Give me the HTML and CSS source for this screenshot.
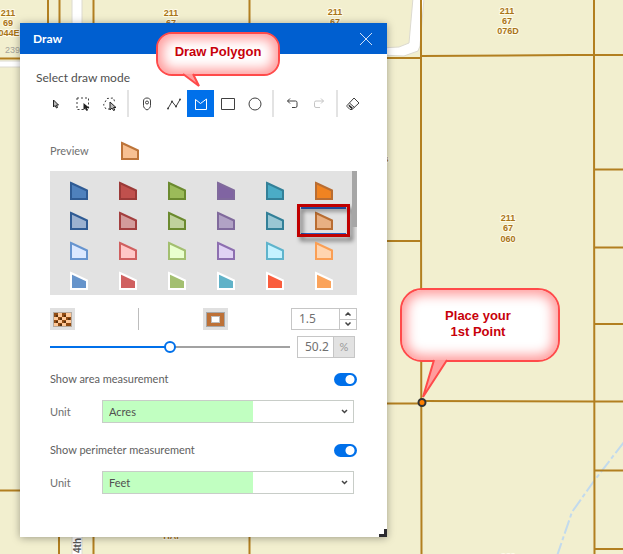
FILE: index.html
```html
<!DOCTYPE html>
<html lang="en">
<head>
<meta charset="utf-8">
<title>Draw</title>
<link rel="stylesheet" href="styles.css">
</head>
<body>
<main class="map">
  <svg class="map-canvas" viewBox="0 0 623 554" preserveAspectRatio="xMinYMin slice" aria-label="Parcel map">
    <rect class="land" width="623" height="554"/>
    <g class="road">
      <path d="M72 -2V61H-2V67H72V556H82V-2Z"/>
      <path d="M413 -2L409 43L399 47L380 48V55L404 56L418 51L420 46L424 -2Z"/>
    </g>
    <path class="stream" d="M624 442L594 481L572 512L557 556"/>
    <g class="parcel">
      <path d="M48 0V58M59.500 0V58M59 60V554M93.500 0V554M249.500 0V554M0 58.500H72M0 490.500H72"/>
      <path d="M421 0V190L421.500 554M594 0V85L594.500 554"/>
      <path d="M380 58H421M421 56L571 55H623M380 241H421M594 169.500H623M594 247.500H623M594 324H623M380 403.500H421M421 401L594 401.500H623M594 470.500H623M594 549H623"/>
    </g>
    <g class="parcel-label">
      <text x="8" y="16">211</text><text x="8" y="26">69</text><text x="9" y="36">044E</text>
      <text x="171" y="16">211</text><text x="171" y="26">67</text>
      <text x="335" y="15">211</text><text x="335" y="25">67</text>
      <text x="507" y="14">211</text><text x="507" y="24">67</text><text x="508" y="34">076D</text>
      <text x="508" y="221">211</text><text x="508" y="231">67</text><text x="508" y="242">060</text>
      <text x="171" y="539">HAI</text><text x="508" y="560">211</text>
      <text x="386" y="162">s</text>
    </g>
    <text class="address" x="5" y="53">239</text>
    <text class="street" transform="translate(81 553) rotate(-90)">4th</text>
    <circle class="point" cx="422" cy="402.500" r="3.500"/>
  </svg>

  <section class="panel">
    <header class="panel-header">
      <h1>Draw</h1>
      <button class="close" aria-label="Close"><svg width="12" height="12" viewBox="0 0 12 12"><path d="M0 0L12 12M12 0L0 12"/></svg></button>
    </header>
    <div class="panel-body">
      <h2>Select draw mode</h2>
      <div class="toolbar">
        <button aria-label="Select"><svg viewBox="0 0 16 16"><path class="thin" d="M5.500 4V11L7 9.500L8.500 12L9.500 11.500L8.500 9H10.500Z"/></svg></button>
        <button aria-label="Select by rectangle"><svg viewBox="0 0 16 16"><path class="dash" d="M2 2H13.500V13.500H2Z"/><path class="solid" d="M8.500 7V14L10.300 12.500L11.500 15L13 14.300L12 12H14.500Z"/></svg></button>
        <button aria-label="Select by lasso"><svg viewBox="0 0 16 16"><path class="dash" d="M8 13H4L1.500 9L5 2.500L11.500 2L13 7"/><path class="thin" d="M8 6V14L10 12L11.500 14.500L12.800 14L11.500 11.500H14Z"/></svg></button>
        <span class="divider"></span>
        <button aria-label="Draw point"><svg viewBox="0 0 16 16"><path d="M8 14C5.500 12.500 4.500 11.500 4.500 9.500V5C4.500 3 6 2 8 2S11.500 3 11.500 5V9.500C11.500 11.500 10.500 12.500 8 14Z"/><circle cx="8" cy="6.500" r="1.500"/></svg></button>
        <button aria-label="Draw line"><svg viewBox="0 0 16 16"><path d="M2 12.500L6 5.500L10 10.500L14 3.500"/><path class="dots" d="M2 12.500h.01M6 5.500h.01M10 10.500h.01M14 3.500h.01"/></svg></button>
        <button class="active" aria-label="Draw polygon" aria-pressed="true"><svg viewBox="0 0 16 16"><path d="M2.500 3.500L7.500 7.500L13.500 3V13.500H2.500Z"/></svg></button>
        <button aria-label="Draw rectangle"><svg viewBox="0 0 16 16"><path d="M1.500 2.500H14.500V13.500H1.500Z"/></svg></button>
        <button aria-label="Draw circle"><svg viewBox="0 0 16 16"><circle cx="8" cy="8" r="6"/></svg></button>
        <span class="divider"></span>
        <button aria-label="Undo"><svg viewBox="0 0 16 16"><path d="M6 2.500L3.500 5L6 7.500M3.500 5H11.500Q13 5 13 6.500V10Q13 11.500 11.500 11.500H8"/></svg></button>
        <button aria-label="Redo" disabled><svg viewBox="0 0 16 16"><path d="M10 2.500L12.500 5L10 7.500M12.500 5H5Q3.500 5 3.500 6.500V10Q3.500 11.500 5 11.500H9"/></svg></button>
        <span class="divider"></span>
        <button class="narrow" aria-label="Clear"><svg viewBox="0 0 16 16"><path d="M2 9.500L9 2L14 7L7 13.500H5L2 10.500ZM4.500 7L9.500 11.500"/><path class="solid" d="M4 8.500L8 12L6.500 13L3.500 10Z"/></svg></button>
      </div>

      <div class="preview">
        <span>Preview</span>
        <svg class="swatch" viewBox="0 0 20 20"><path fill="#f7c092" stroke="#bd7439" d="M2 2L18 9.500V18H2Z"/></svg>
      </div>

      <div class="palette">
        <div class="palette-grid" id="palette"></div>
        <span class="scroll-thumb"></span>
      </div>

      <div class="style-row">
        <button class="style-button" aria-label="Fill color"><svg width="19" height="15" viewBox="0 0 19 15"><rect x=".5" y=".5" width="18" height="14" fill="#ffc897" stroke="#b4aaa0"/><path fill="#914b12" d="M1 1h4v4h-4zM9 1h4v4h-4zM5 5h4v3h-4zM13 5h5v3h-5zM1 8h4v3h-4zM9 8h4v3h-4zM5 11h4v3h-4zM13 11h5v3h-5z"/><path fill="#59300d" d="M3 3h2v2h-2zM11 3h2v2h-2zM7 6h2v2h-2zM15 6h2v2h-2zM3 9h2v2h-2zM11 9h2v2h-2zM7 12h2v2h-2z"/></svg></button>
        <span class="style-divider"></span>
        <button class="style-button" aria-label="Outline color"><svg width="19" height="15" viewBox="0 0 19 15"><rect x=".5" y=".5" width="18" height="14" fill="#bd7137" stroke="#a8a8a8"/><rect x="5.500" y="4.500" width="8" height="6" fill="#fff" stroke="#bdbdbd"/></svg></button>
        <div class="stepper">
          <input type="number" value="1.5" step="0.5" aria-label="Outline width">
          <div class="stepper-buttons">
            <button aria-label="Increase"><svg width="6" height="4" viewBox="0 0 6 4"><path d="M.5 3.500L3 1L5.500 3.500"/></svg></button>
            <button aria-label="Decrease"><svg width="6" height="4" viewBox="0 0 6 4"><path d="M.5 .5L3 3L5.500 .5"/></svg></button>
          </div>
        </div>
      </div>

      <div class="opacity-row">
        <input class="slider" type="range" min="0" max="100" step="0.1" value="50.2" aria-label="Opacity">
        <div class="percent"><input type="text" value="50.2" aria-label="Opacity percent"><span>%</span></div>
      </div>

      <div class="measure">
        <div class="measure-row">
          <label for="area">Show area measurement</label>
          <input class="toggle" id="area" type="checkbox" role="switch" checked>
        </div>
        <div class="unit-row">
          <label for="area-unit">Unit</label>
          <div class="select"><select id="area-unit"><option>Acres</option></select><svg width="7" height="5" viewBox="0 0 7 5"><path d="M1 1L3.500 3.500L6 1"/></svg></div>
        </div>
      </div>
      <div class="measure">
        <div class="measure-row">
          <label for="perimeter">Show perimeter measurement</label>
          <input class="toggle" id="perimeter" type="checkbox" role="switch" checked>
        </div>
        <div class="unit-row">
          <label for="perimeter-unit">Unit</label>
          <div class="select"><select id="perimeter-unit"><option>Feet</option></select><svg width="7" height="5" viewBox="0 0 7 5"><path d="M1 1L3.500 3.500L6 1"/></svg></div>
        </div>
      </div>
    </div>
    <span class="resize"></span>
  </section>

  <div class="callout callout-draw">Draw Polygon
    <svg class="tail" width="20" height="16" viewBox="0 0 20 16"><path d="M2 2L18 14L12 2"/></svg>
  </div>
  <div class="callout callout-place">Place your<br>1st Point
    <svg class="tail" width="28" height="42" viewBox="0 0 28 42"><path d="M13 2L2 39L26 2"/></svg>
  </div>
</main>
<script src="palette.js"></script>
</body>
</html>
```
FILE: styles.css
```css
* { box-sizing: border-box; }
body {
  margin: 0;
  font: 11px/16px Lato, "Open Sans", sans-serif;
  color: #4f4f4f;
}
button, input, select { font: inherit; color: inherit; margin: 0; }
button { padding: 0; border: 0; background: none; }
h1, h2 { margin: 0; font-size: 12px; font-weight: 400; }

/* Map */
.map { position: relative; min-height: 100vh; overflow: hidden; background: #f2efcf; }
.map-canvas { position: absolute; top: 0; left: 0; width: 100%; height: 100%; }
.land { fill: #f2efcf; }
.road { fill: #fff; stroke: #dcdad0; stroke-width: 1; }
.parcel { fill: none; stroke: #b27f20; stroke-width: 2; }
.stream { fill: none; stroke: #c2daed; stroke-width: 2; stroke-dasharray: 14 3 4 3; }
.parcel-label {
  font: bold 9px "Liberation Sans", sans-serif;
  text-anchor: middle;
  fill: #a87418;
  stroke: #fffbe8;
  stroke-width: 2;
  paint-order: stroke;
}
.address { font: 9px "Liberation Sans", sans-serif; fill: #a5a49a; }
.street { font: bold 10px "Liberation Sans", sans-serif; fill: #555; }
.point { fill: #ff7f00; stroke: #333; stroke-width: 2; }

/* Draw window */
.panel {
  position: absolute;
  top: 23px;
  left: 20px;
  width: 367px;
  background: #fff;
  box-shadow: 0 1px 8px rgba(0, 0, 0, .35);
}
.panel-header {
  display: flex;
  align-items: center;
  justify-content: space-between;
  height: 31px;
  padding: 0 15px 0 13px;
  background: #005fd0;
  color: #fff;
}
.panel-header h1 { font-weight: 700; }
.close { display: flex; }
.close path { stroke: #cfe0f7; }
.panel-body { padding: 15px 30px 43px; }
h2 { margin-left: -14px; line-height: 17px; }

.toolbar { display: flex; height: 27px; margin: 4px -8px 0; }
.toolbar button { display: grid; place-items: center; flex: none; width: 27px; }
.toolbar .narrow { width: 22px; }
.toolbar svg { width: 16px; height: 16px; fill: none; stroke: #404040; stroke-width: 1; }
.toolbar .active { background: #0070ea; }
.toolbar .active svg { stroke: #fff; }
.toolbar button:disabled svg { stroke: #c4c4c4; }
.toolbar .dash { stroke-width: 1; stroke-dasharray: 2 2; }
.toolbar .solid { fill: #222; stroke: none; }
.toolbar .thin { fill: #bbb; stroke: #222; }
.toolbar .dots { stroke-width: 2; stroke-linecap: round; }
.divider { flex: none; width: 2px; margin: 0 4px; background: #e3e3e3; }

.preview { display: flex; align-items: center; gap: 31px; height: 54px; color: #707070; }
.preview span { margin-top: 14px; }
.preview svg { margin-top: 14px; }
.swatch { display: block; width: 20px; height: 20px; stroke-width: 2; }

.palette { position: relative; height: 124px; padding: 5px 9px 0 4px; overflow: hidden; background: #e2e2e2; }
.palette-grid { display: grid; grid-template-columns: repeat(6, 1fr); grid-auto-rows: 30px; }
.palette-grid button { position: relative; display: grid; place-items: center; }
.palette-grid .selected::before { content: ""; position: absolute; inset: 1px 2px; border: solid #2a5fc0; border-width: 2px 0; }
.palette-grid .selected::after {
  content: "";
  position: absolute;
  inset: -2px -2px -1px;
  border: 3px solid #c00000;
  filter: drop-shadow(3px 4px 2px rgba(0, 0, 0, .5));
}
.scroll-thumb { position: absolute; top: 0; right: 0; width: 5px; height: 56px; background: #a6a6a6; }

.style-row { display: flex; align-items: center; justify-content: space-between; height: 22px; margin-top: 13px; }
.style-button { display: grid; place-items: center; width: 25px; height: 22px; background: #e0e0e0; }
.style-divider { width: 1px; height: 22px; background: #bdbdbd; }
.stepper { display: flex; width: 66px; height: 22px; border: 1px solid #c6c6c6; }
.stepper input, .percent input { width: 100%; min-width: 0; border: 0; padding: 0 0 0 7px; font-family: "Noto Sans", sans-serif; font-size: 12px; color: #707070; appearance: textfield; }
.stepper input::-webkit-inner-spin-button { display: none; }
.stepper-buttons { display: grid; flex: none; width: 17px; border-left: 1px solid #c6c6c6; }
.stepper-buttons button { display: grid; place-items: center; }
.stepper-buttons button + button { border-top: 1px solid #c6c6c6; }
.stepper svg, .select svg { fill: none; stroke: #444; stroke-width: 1.5; }

.opacity-row { display: flex; align-items: center; gap: 7px; margin-top: 6px; height: 22px; }
.slider { flex: 1; min-width: 0; height: 12px; appearance: none; background: linear-gradient(90deg, #0070ea 50%, #a2a2a2 50%) center / 100% 2px no-repeat; }
.slider::-webkit-slider-thumb { appearance: none; width: 12px; height: 12px; border: 2px solid #0070ea; border-radius: 50%; background: #fff; }
.percent { display: flex; width: 58px; height: 22px; margin-right: 2px; border: 1px solid #c6c6c6; }
.percent span { flex: none; width: 21px; border-left: 1px solid #c6c6c6; background: #e2e2e2; color: #999; text-align: center; line-height: 20px; }

.measure { padding-top: 13px; }
.measure + .measure { padding-top: 19px; }
.measure-row { display: flex; align-items: center; justify-content: space-between; height: 16px; color: #606060; }
.toggle { appearance: none; width: 23px; height: 13px; border-radius: 7px; background: radial-gradient(circle at 16px 50%, #fff 4px, #0070ea 5px); }
.unit-row { display: flex; align-items: center; margin: 13px 3px 0 0; color: #707070; }
.unit-row label { width: 52px; }
.select { display: grid; flex: 1; align-items: center; }
.select select, .select svg { grid-area: 1 / 1; }
.select select { appearance: none; width: 100%; height: 23px; padding: 0 6px; border: 1px solid #c8cdc8; border-radius: 0; background: linear-gradient(90deg, #c1ffc1 60%, #fff 60%); color: #505050; }
.select svg { justify-self: end; margin-right: 6px; pointer-events: none; }
.resize { position: absolute; right: 0; bottom: 0; width: 8px; height: 8px; border: solid #2b2b30; border-width: 0 3px 3px 0; }

/* Callouts */
.callout {
  position: absolute;
  display: grid;
  place-content: center;
  border: 2px solid #ff4a4a;
  background: #fff;
  box-shadow: inset 0 0 12px 5px #ff9d9d;
  color: #c8000a;
  font: bold 13px/16px "Liberation Sans", sans-serif;
  text-align: center;
}
.tail { position: absolute; fill: #ff9d9d; stroke: #ff4a4a; stroke-width: 2; }
.callout-draw { top: 32px; left: 156px; width: 124px; height: 44px; padding-bottom: 4px; border-radius: 16px; }
.callout-draw .tail { top: 38px; left: 23px; }
.callout-place { top: 288px; left: 400px; width: 160px; height: 74px; padding: 0 4px 2px 0; border-radius: 22px; }
.callout-place .tail { top: 68px; left: 19px; }
```
FILE: palette.js
```js
// Fill and stroke of each symbol, row by row.
const symbols = [
  ["#4f81bd", "#2f5b94"], ["#c0504d", "#9b3a38"], ["#9bbb59", "#6b8a2f"], ["#8064a2", "#806a9c"], ["#4bacc6", "#338098"], ["#f08321", "#b96d32"],
  ["#9bb1d0", "#2f5b94"], ["#d39b9b", "#a33f3f"], ["#bfd19c", "#6b8a2f"], ["#b1a2c5", "#806a9c"], ["#99c7d4", "#338098"], ["#e8b083", "#b96d32"],
  ["#dbe8ff", "#6694cf"], ["#ffc7c7", "#d06060"], ["#e9ffce", "#a3bf70"], ["#e0d2f4", "#8d6fb0"], ["#c4f2ff", "#5fb4cc"], ["#ffd5b0", "#fa9f55"],
  ["#6694cb", "#fff"], ["#d06060", "#fff"], ["#a3bf70", "#fff"], ["#60b2c8", "#fff"], ["#fa5c3c", "#fff"], ["#fba35b", "#fff"]
];
document.getElementById("palette").innerHTML = symbols.map(([fill, stroke], i) =>
  `<button class="${i === 11 ? "selected" : ""}" aria-label="Symbol ${i + 1}"><svg class="swatch" viewBox="0 0 20 20"><path fill="${fill}" stroke="${stroke}" d="M2 2L18 9.500V18H2Z"/></svg></button>`
).join("");
```
